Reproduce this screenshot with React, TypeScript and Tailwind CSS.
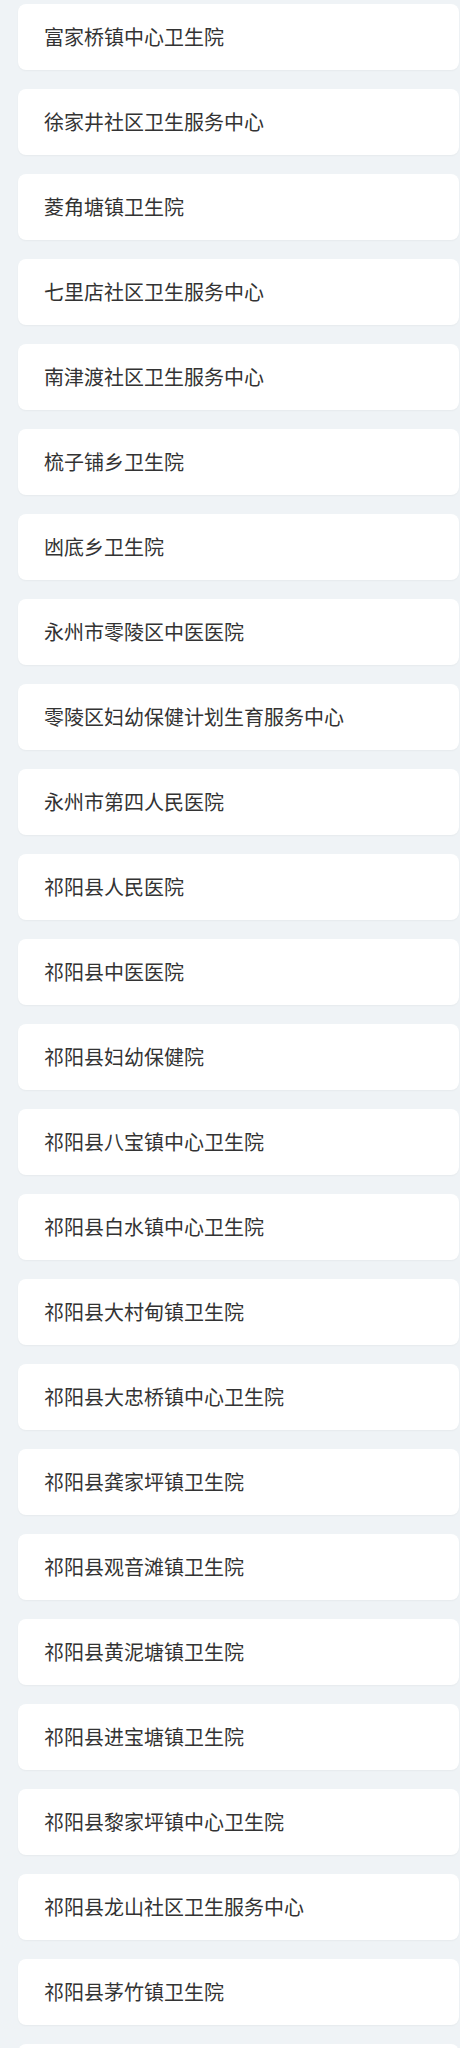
import React from "react";

const items = [
  "富家桥镇中心卫生院",
  "徐家井社区卫生服务中心",
  "菱角塘镇卫生院",
  "七里店社区卫生服务中心",
  "南津渡社区卫生服务中心",
  "梳子铺乡卫生院",
  "凼底乡卫生院",
  "永州市零陵区中医医院",
  "零陵区妇幼保健计划生育服务中心",
  "永州市第四人民医院",
  "祁阳县人民医院",
  "祁阳县中医医院",
  "祁阳县妇幼保健院",
  "祁阳县八宝镇中心卫生院",
  "祁阳县白水镇中心卫生院",
  "祁阳县大村甸镇卫生院",
  "祁阳县大忠桥镇中心卫生院",
  "祁阳县龚家坪镇卫生院",
  "祁阳县观音滩镇卫生院",
  "祁阳县黄泥塘镇卫生院",
  "祁阳县进宝塘镇卫生院",
  "祁阳县黎家坪镇中心卫生院",
  "祁阳县龙山社区卫生服务中心",
  "祁阳县茅竹镇卫生院",
  "",
];

export default function App() {
  return (
    <div
      className="min-h-screen bg-[#eff3f6] pt-[4px] pl-[18px] pr-[1px] overflow-hidden"
      style={{ fontFamily: '"Noto Sans CJK SC", "Noto Sans", sans-serif' }}
    >
      <div className="flex flex-col gap-[19px]">
        {items.map((name, i) => (
          <div
            key={i}
            className="h-[66px] shrink-0 rounded-[8px] bg-white shadow-[0_1px_2px_rgba(0,0,0,0.04)] flex items-center pl-[26px]"
          >
            <span className="text-[20px] leading-none text-[#333333]">{name}</span>
          </div>
        ))}
      </div>
    </div>
  );
}
